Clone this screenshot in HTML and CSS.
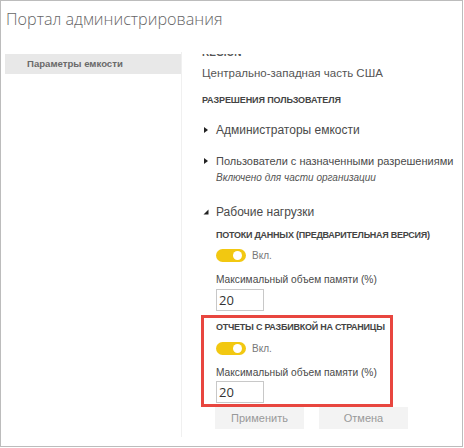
FILE: index.html
```html
<!DOCTYPE html>
<html lang="ru">
<head>
<meta charset="utf-8">
<link rel="stylesheet" href="styles.css">
</head>
<body>
<div class="frame">
  <div class="title">Портал администрирования</div>
  <div class="main">
    <div class="sidebar">
      <div class="nav-item">Параметры емкости</div>
    </div>
    <div class="content">
      <div class="region"><span class="region-text">REGION</span></div>
      <div class="region-value">Центрально-западная часть США</div>
      <div class="heading perms">РАЗРЕШЕНИЯ ПОЛЬЗОВАТЕЛЯ</div>
      <div class="expander admins">
        <svg class="caret" width="6" height="8" viewBox="0 0 6 8"><path d="M1 1 L5 4 L1 7 Z" fill="#222"/></svg>
        <span>Администраторы емкости</span>
      </div>
      <div class="expander users">
        <svg class="caret" width="6" height="8" viewBox="0 0 6 8"><path d="M1 1 L5 4 L1 7 Z" fill="#222"/></svg>
        <span>Пользователи с назначенными разрешениями</span>
      </div>
      <div class="note">Включено для части организации</div>
      <div class="expander workloads">
        <svg class="caret" width="6" height="8" viewBox="0 0 6 8"><path d="M5.5 1.5 L5.5 6.5 L0.5 6.5 Z" fill="#222"/></svg>
        <span>Рабочие нагрузки</span>
      </div>
      <div class="section">
        <div class="heading sub">ПОТОКИ ДАННЫХ (ПРЕДВАРИТЕЛЬНАЯ ВЕРСИЯ)</div>
        <div class="toggle-row"><span class="toggle"></span><span class="toggle-label">Вкл.</span></div>
        <div class="field-label">Максимальный объем памяти (%)</div>
        <div class="input">20</div>
      </div>
      <div class="highlight">
        <div class="heading">ОТЧЕТЫ С РАЗБИВКОЙ НА СТРАНИЦЫ</div>
        <div class="toggle-row"><span class="toggle"></span><span class="toggle-label">Вкл.</span></div>
        <div class="field-label">Максимальный объем памяти (%)</div>
        <div class="input">20</div>
      </div>
      <div class="buttons">
        <div class="btn">Применить</div>
        <div class="btn">Отмена</div>
      </div>
    </div>
  </div>
</div>
</body>
</html>
```

FILE: styles.css
```css
* { box-sizing: border-box; }
html, body { margin: 0; padding: 0; background: #fff; }
body { font-family: "Liberation Sans", Arial, sans-serif; }

.frame {
  width: 463px;
  height: 447px;
  border: 1px solid #bcbcbc;
  overflow: hidden;
  display: flex;
  flex-direction: column;
}

.title {
  height: 51px;
  padding: 5px 0 0 5px;
  font-family: "Open Sans", sans-serif;
  font-size: 16.2px;
  font-weight: 300;
  color: #666;
  line-height: 26px;
}

.main {
  flex: 1;
  display: flex;
}

.sidebar {
  width: 177px;
  margin-left: 4px;
  border-right: 1px solid #f0f0f0;
  padding-top: 2px;
  height: 385px;
}

.nav-item {
  height: 20px;
  line-height: 20px;
  background: #e8e8e8;
  padding-left: 22px;
  font-size: 9.6px;
  font-weight: 700;
  color: #6a6a6a;
}

.content {
  flex: 1;
  padding-left: 20px;
  overflow: hidden;
}

.region {
  margin-top: 2px;
  height: 3px;
  overflow: hidden;
}
.region-text {
  display: block;
  margin-top: -8px;
  line-height: 14px;
  font-size: 10px;
  font-weight: 700;
  color: #555;
}

.region-value {
  margin-top: 9px;
  line-height: 14px;
  font-size: 11.5px;
  color: #555;
}

.heading {
  line-height: 14px;
  font-size: 9px;
  font-weight: 700;
  letter-spacing: -0.25px;
  color: #444;
  white-space: nowrap;
}

.perms { margin-top: 13px; letter-spacing: -0.1px; }

.expander {
  display: flex;
  align-items: center;
  height: 18px;
  font-size: 12px;
  color: #4a4a4a;
  white-space: nowrap;
}
.expander .caret { width: 6px; margin-left: 1px; margin-right: 7px; flex: none; }
.admins { margin-top: 14px; }
.users { margin-top: 13px; font-size: 11px; }
.workloads { margin-top: 18px; }

.note {
  margin-top: 1px;
  padding-left: 14px;
  line-height: 14px;
  font-size: 10px;
  font-style: italic;
  color: #555;
}

.section { padding-left: 14px; margin-top: 7px; }

.toggle-row {
  display: flex;
  align-items: center;
  height: 14px;
  margin-top: 6px;
}
.toggle {
  position: relative;
  width: 30px;
  height: 13px;
  border-radius: 7px;
  background: #f2c811;
}
.toggle::after {
  content: "";
  position: absolute;
  right: 4px;
  top: 2px;
  width: 9px;
  height: 9px;
  border-radius: 50%;
  background: #fff;
}
.toggle-label {
  margin-left: 6px;
  font-size: 10px;
  color: #777;
}

.field-label {
  margin-top: 11px;
  line-height: 14px;
  font-size: 10.2px;
  color: #4a4a4a;
  white-space: nowrap;
}

.input {
  margin-top: 2px;
  width: 48px;
  height: 22px;
  border: 1px solid #c8c8c8;
  padding-left: 2px;
  font-family: "Open Sans", sans-serif;
  font-size: 13px;
  line-height: 20px;
  color: #333;
}

.highlight {
  margin-top: 4px;
  margin-left: -1px;
  width: 192px;
  border: 3px solid #e8463f;
  padding: 2px 0 1px 12px;
}
.highlight .toggle-row { margin-top: 7px; }
.highlight .input { margin-top: 1px; }

.buttons {
  display: flex;
  gap: 15px;
  padding-left: 13px;
}
.btn {
  width: 89px;
  height: 22px;
  line-height: 22px;
  text-align: center;
  background: #f3f3f3;
  font-size: 11px;
  color: #999;
}
```
